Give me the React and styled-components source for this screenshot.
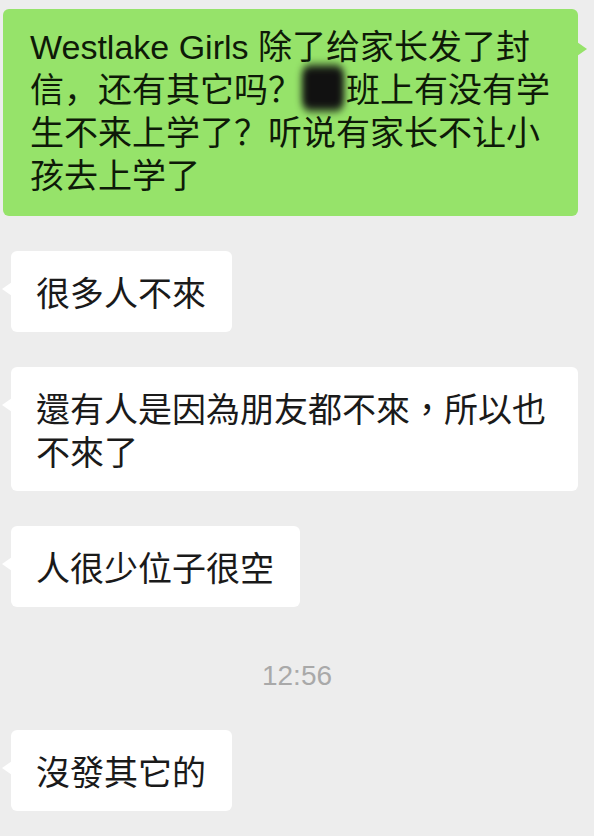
import styled, { createGlobalStyle } from 'styled-components';

const GlobalStyle = createGlobalStyle`
    html, body {
        margin: 0;
        padding: 0;
        background-color: #ededed;
    }
`;

function App() {
    return (
        <>
            <GlobalStyle />
            <Chat>
                <Row $mine>
                    <Bubble $mine lang="zh-Hans">
                        Westlake Girls 除了给家长发了封<br />
                        信，还有其它吗？<Redacted />班上有没有学<br />
                        生不来上学了？听说有家长不让小<br />
                        孩去上学了
                    </Bubble>
                </Row>

                <Row>
                    <Bubble lang="zh-Hant">很多人不來</Bubble>
                </Row>

                <Row>
                    <Bubble lang="zh-Hant">還有人是因為朋友都不來，所以也不來了</Bubble>
                </Row>

                <Row>
                    <Bubble lang="zh-Hant">人很少位子很空</Bubble>
                </Row>

                <TimeStamp>12:56</TimeStamp>

                <Row>
                    <Bubble lang="zh-Hant">沒發其它的</Bubble>
                </Row>
            </Chat>
        </>
    );
}

export default App;

// & CSS COMPONENTS

const Chat = styled.div`
    width: 594px;
    height: 836px;
    box-sizing: border-box;
    padding-top: 9px;
    display: flex;
    flex-direction: column;
    gap: 35px;
    overflow: hidden;
    background-color: #ededed;
`;

const Row = styled.div`
    display: flex;
    justify-content: flex-start;
    padding-left: ${(p) => (p.$mine ? '3px' : '11px')};
    padding-right: ${(p) => (p.$mine ? '15px' : '16px')};
`;

const Bubble = styled.div`
    position: relative;
    box-sizing: border-box;
    max-width: ${(p) => (p.$mine ? '576px' : '567px')};
    padding: ${(p) => (p.$mine ? '17px 28px 18px 27px' : '19px 26px 19px 25px')};
    border-radius: 6px;
    background-color: ${(p) => (p.$mine ? '#96e36a' : '#ffffff')};
    color: ${(p) => (p.$mine ? '#0e1a08' : '#1a1a1a')};
    font-family: ${(p) => (p.$mine
        ? '"Liberation Sans", "Noto Sans CJK SC", sans-serif'
        : '"Noto Sans CJK TC", sans-serif')};
    font-size: 34px;
    line-height: 43px;
    white-space: ${(p) => (p.$mine ? 'nowrap' : 'normal')};

    &::before {
        content: '';
        position: absolute;
        top: ${(p) => (p.$mine ? '33px' : '31px')};
        ${(p) => (p.$mine ? 'right: -9px;' : 'left: -9px;')}
        width: 0;
        height: 0;
        border-top: 7px solid transparent;
        border-bottom: 7px solid transparent;
        ${(p) => (p.$mine
            ? 'border-left: 10px solid #96e36a;'
            : 'border-right: 10px solid #ffffff;')}
    }
`;

const Redacted = styled.span`
    display: inline-block;
    width: 42px;
    height: 38px;
    margin: 0 2px 0 0;
    vertical-align: -8px;
    background-color: #111;
    border-radius: 8px;
    filter: blur(3.5px);
    transform: translateY(-3px) scaleY(1.2);
`;

const TimeStamp = styled.div`
    padding: 20px 0 5px;
    text-align: center;
    font-family: "Liberation Sans", sans-serif;
    font-size: 28px;
    line-height: 28px;
    color: #a9a9a9;
`;
